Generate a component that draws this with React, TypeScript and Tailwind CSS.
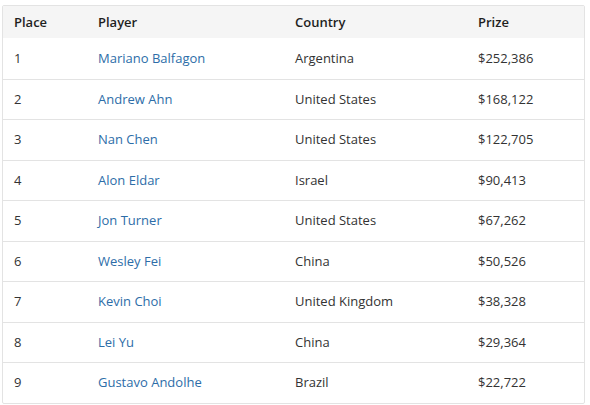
const rows = [
  { place: 1, player: 'Mariano Balfagon', country: 'Argentina', prize: '$252,386' },
  { place: 2, player: 'Andrew Ahn', country: 'United States', prize: '$168,122' },
  { place: 3, player: 'Nan Chen', country: 'United States', prize: '$122,705' },
  { place: 4, player: 'Alon Eldar', country: 'Israel', prize: '$90,413' },
  { place: 5, player: 'Jon Turner', country: 'United States', prize: '$67,262' },
  { place: 6, player: 'Wesley Fei', country: 'China', prize: '$50,526' },
  { place: 7, player: 'Kevin Choi', country: 'United Kingdom', prize: '$38,328' },
  { place: 8, player: 'Lei Yu', country: 'China', prize: '$29,364' },
  { place: 9, player: 'Gustavo Andolhe', country: 'Brazil', prize: '$22,722' },
];

export default function App() {
  return (
    <div className="w-[590px] h-[405px] bg-white pt-[5px] pl-[2px] font-['Open_Sans',sans-serif] text-[13px]">
      <div className="w-[583px] border border-[#e3e3e3] rounded-[2px] overflow-hidden">
        <div className="grid grid-cols-[95px_197px_183px_1fr] items-center h-[32px] pt-px bg-[#f5f5f5] font-semibold text-[#1f1f1f]">
          <div className="pl-[11px]">Place</div>
          <div>Player</div>
          <div>Country</div>
          <div>Prize</div>
        </div>
        {rows.map((r, i) => (
          <div
            key={r.place}
            className={`grid grid-cols-[95px_197px_183px_1fr] items-center h-[40.5px] text-[#333] ${i > 0 ? 'border-t border-[#e3e3e3]' : ''}`}
          >
            <div className="pl-[11px]">{r.place}</div>
            <div className="text-[#2d6da8]">{r.player}</div>
            <div>{r.country}</div>
            <div>{r.prize}</div>
          </div>
        ))}
      </div>
    </div>
  );
}
